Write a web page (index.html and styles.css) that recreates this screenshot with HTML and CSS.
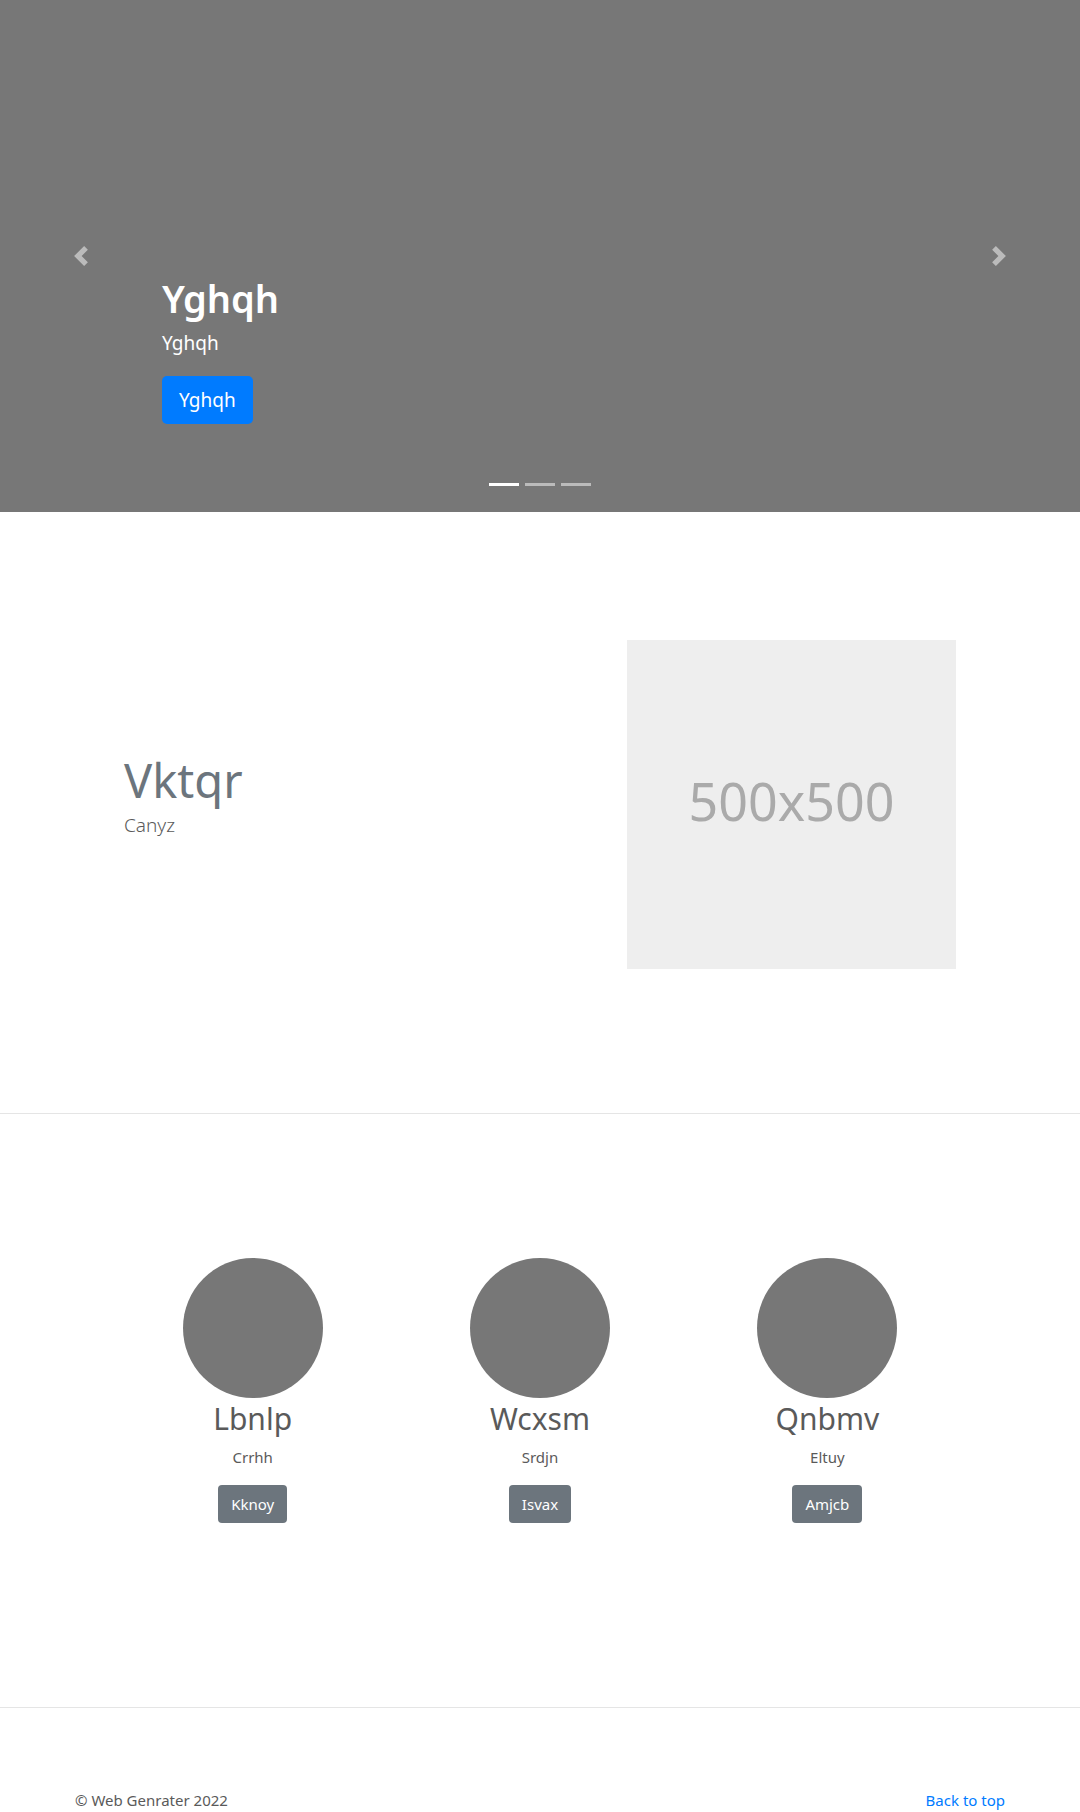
FILE: index.html
```
<!DOCTYPE html>
<html lang="en">
<head>
  <meta charset="utf-8">
  <meta name="viewport" content="width=device-width, initial-scale=1">
  <title>Web Genrater</title>
  <link rel="stylesheet" href="styles.css">
</head>
<body id="top">
  <main>
    <section class="carousel" aria-label="Highlights">
      <button class="carousel-control" type="button" aria-label="Previous">
        <svg class="carousel-icon" viewBox="0 0 8 8" aria-hidden="true"><path d="M5.250 0l-4 4 4 4 1.500-1.500L4.250 4l2.500-2.500L5.250 0z"/></svg>
      </button>
      <div class="carousel-caption">
        <h1 class="carousel-title">Yghqh</h1>
        <p class="carousel-text">Yghqh</p>
        <button class="btn btn-primary" type="button">Yghqh</button>
      </div>
      <button class="carousel-control" type="button" aria-label="Next">
        <svg class="carousel-icon" viewBox="0 0 8 8" aria-hidden="true"><path d="M2.750 0l-1.500 1.500L3.750 4l-2.500 2.500L2.750 8l4-4-4-4z"/></svg>
      </button>
      <div class="carousel-indicators">
        <button class="indicator active" type="button" aria-label="Slide 1"></button>
        <button class="indicator" type="button" aria-label="Slide 2"></button>
        <button class="indicator" type="button" aria-label="Slide 3"></button>
      </div>
    </section>

    <section class="section feature">
      <div class="feature-copy">
        <h2 class="feature-title">Vktqr</h2>
        <p class="feature-text">Canyz</p>
      </div>
      <div class="placeholder">500x500</div>
    </section>

    <hr class="divider">

    <section class="section cards">
      <article class="card">
        <div class="avatar"></div>
        <h2 class="card-title">Lbnlp</h2>
        <p class="card-text">Crrhh</p>
        <button class="btn btn-secondary" type="button">Kknoy</button>
      </article>
      <article class="card">
        <div class="avatar"></div>
        <h2 class="card-title">Wcxsm</h2>
        <p class="card-text">Srdjn</p>
        <button class="btn btn-secondary" type="button">Isvax</button>
      </article>
      <article class="card">
        <div class="avatar"></div>
        <h2 class="card-title">Qnbmv</h2>
        <p class="card-text">Eltuy</p>
        <button class="btn btn-secondary" type="button">Amjcb</button>
      </article>
    </section>

    <hr class="divider">
  </main>
  <footer class="footer">
    <span>© Web Genrater 2022</span>
    <a class="footer-link" href="#top">Back to top</a>
  </footer>
</body>
</html>
```
FILE: styles.css
```
*,
*::before,
*::after {
  box-sizing: border-box;
}

body {
  margin: 0;
  background: #fff;
  color: #5a5a5a;
  font-family: "Noto Sans", sans-serif;
  font-size: 15px;
  line-height: 24px;
}

h1,
h2,
p {
  margin: 0;
}

.btn {
  padding: 6px 12px;
  border: 1px solid transparent;
  border-radius: 4px;
  color: #fff;
  font: inherit;
  cursor: pointer;
}

.btn-primary {
  padding: 8px 16px;
  border-radius: 5px;
  background: #007bff;
  font-size: 19px;
  line-height: 30px;
}

.btn-secondary {
  background: #6c757d;
}

.carousel {
  position: relative;
  display: grid;
  grid-template-columns: 15% 1fr 15%;
  min-height: 512px;
  background: #777;
  color: #fff;
}

.carousel-control {
  display: flex;
  align-items: center;
  justify-content: center;
  padding: 0;
  border: 0;
  background: none;
  opacity: 0.5;
  cursor: pointer;
}

.carousel-icon {
  width: 20px;
  height: 20px;
  fill: #fff;
}

.carousel-caption {
  align-self: end;
  padding-bottom: 88px;
}

.carousel-title {
  margin-bottom: 6px;
  font-size: 38px;
  font-weight: 600;
  line-height: 48px;
}

.carousel-text {
  margin-bottom: 18px;
  font-size: 19px;
  line-height: 30px;
}

.carousel-indicators {
  position: absolute;
  right: 0;
  bottom: 26px;
  left: 0;
  display: flex;
  justify-content: center;
  gap: 6px;
}

.indicator {
  width: 30px;
  height: 3px;
  padding: 0;
  border: 0;
  background: #fff;
  opacity: 0.5;
  cursor: pointer;
}

.indicator.active {
  opacity: 1;
}

.section {
  max-width: 960px;
  margin: 0 auto;
}

.feature {
  display: grid;
  grid-template-columns: 1fr 329px;
  align-items: center;
  padding: 128px 64px 144px;
}

.feature-title {
  color: #6c757d;
  font-size: 47px;
  font-weight: 400;
  line-height: 60px;
}

.feature-text {
  margin-bottom: 20px;
  font-size: 19px;
  font-weight: 300;
  line-height: 30px;
}

.placeholder {
  display: flex;
  align-items: center;
  justify-content: center;
  padding-bottom: 8px;
  aspect-ratio: 1;
  background: #eee;
  color: #aaa;
  font-size: 52px;
}

.divider {
  margin: 0;
  border: 0;
  border-top: 1px solid #e5e5e5;
}

.cards {
  display: grid;
  grid-template-columns: repeat(3, 1fr);
  padding: 144px 49px 184px;
}

.card {
  display: flex;
  flex-direction: column;
  align-items: center;
}

.avatar {
  width: 140px;
  height: 140px;
  border-radius: 50%;
  background: #777;
}

.card-title {
  margin-bottom: 6px;
  font-size: 30px;
  font-weight: 400;
  line-height: 41px;
}

.card-text {
  margin-bottom: 16px;
}

.footer {
  display: flex;
  justify-content: space-between;
  max-width: 960px;
  margin: 0 auto;
  padding: 80px 15px 0;
}

.footer-link {
  color: #007bff;
  text-decoration: none;
}
```
